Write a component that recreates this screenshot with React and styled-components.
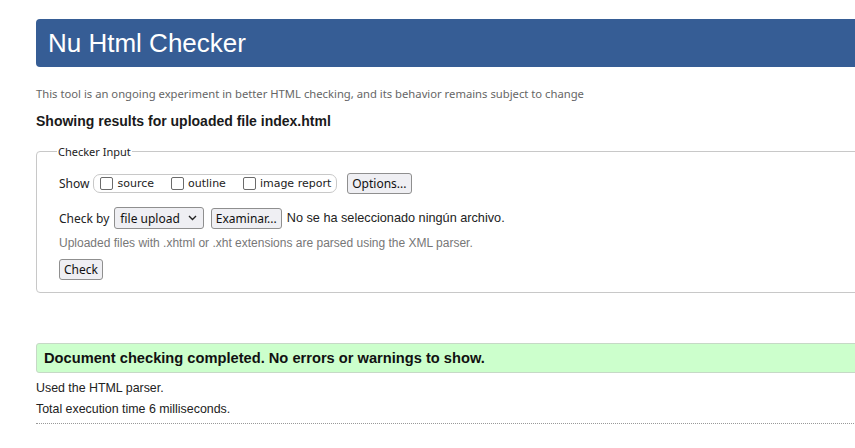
import React from 'react';
import styled, { createGlobalStyle } from 'styled-components';

const Global = createGlobalStyle`
  html, body {
    margin: 0;
    padding: 0;
    overflow: hidden;
    background: #fff;
  }
  body {
    font-family: "Liberation Sans", Arial, sans-serif;
    color: #222;
  }
`;

const Page = styled.div`
  width: 1100px;
  padding: 19px 0 0 36px;
`;

const Header = styled.h1`
  margin: 0;
  height: 48px;
  display: flex;
  align-items: center;
  padding-left: 12px;
  background: #365d95;
  color: #fff;
  border-radius: 4px;
  font-family: "Liberation Sans", Arial, sans-serif;
  font-weight: normal;
  font-size: 26px;
`;

const Intro = styled.p`
  margin: 19px 0 0;
  font-family: "Noto Sans", "Open Sans", sans-serif;
  font-size: 11.25px;
  color: #666;
`;

const Title = styled.h2`
  margin: 12px 0 0;
  font-size: 14px;
  font-weight: bold;
  color: #1a1a1a;
`;

const Fieldset = styled.fieldset`
  margin: 15px 0 0;
  padding: 14px 0 12px 22px;
  border: 1px solid #c8c8c8;
  border-radius: 4px;
`;

const Legend = styled.legend`
  margin-left: -2px;
  padding: 0 1px;
  font-family: "Noto Sans", "Open Sans", sans-serif;
  font-size: 11px;
  color: #222;
`;

const Row = styled.div`
  display: flex;
  align-items: center;
  gap: ${(p) => p.gap || 8}px;
  margin-top: ${(p) => p.top || 0}px;
`;

const Label = styled.span`
  font-family: "Noto Sans", "Open Sans", sans-serif;
  font-size: 12px;
  color: #222;
`;

const Group = styled.div`
  display: flex;
  align-items: center;
  gap: 17px;
  height: 17px;
  padding: 0 5px 0 6px;
  border: 1px solid #c8c8c8;
  border-radius: 7px;
`;

const Check = styled.label`
  display: flex;
  align-items: center;
  gap: 4px;
  font-family: "DejaVu Sans", Verdana, sans-serif;
  font-size: 11px;
  color: #222;
`;

const Box = styled.span`
  width: 11px;
  height: 11px;
  border: 1px solid #6b6b6b;
  border-radius: 2px;
  background: #fff;
`;

const Button = styled.button`
  height: 21px;
  padding: 0 4px;
  margin-left: ${(p) => p.ml || 0}px;
  border: 1px solid #8f8f8f;
  border-radius: 3px;
  background: #efeff3;
  font-family: "Noto Sans", "Open Sans", sans-serif;
  font-size: 12px;
  color: #111;
`;

const Select = styled.div`
  display: flex;
  align-items: center;
  gap: 8px;
  height: 20px;
  padding: 0 6px 0 5px;
  border: 1px solid #8f8f8f;
  border-radius: 3px;
  background: #efeff3;
  font-family: "Noto Sans", "Open Sans", sans-serif;
  font-size: 12px;
  color: #111;
`;

const FileNote = styled.span`
  font-size: 12.7px;
  color: #222;
`;

const Hint = styled.p`
  margin: 7px 0 0;
  font-size: 12px;
  color: #777;
`;

const Success = styled.div`
  margin-top: 50px;
  height: 28px;
  display: flex;
  align-items: center;
  padding-left: 7px;
  background: #ccffcc;
  border: 1px solid #c6d9c6;
  border-radius: 3px;
  font-size: 14.67px;
  font-weight: bold;
  color: #111;
`;

const Info = styled.p`
  margin: ${(p) => p.top || 0}px 0 0;
  font-size: 12.4px;
  color: #222;
`;

const Divider = styled.hr`
  margin: 7px 0 0;
  border: 0;
  border-top: 1px dotted #999;
`;

const Chevron = () => (
  <svg width="9" height="6" viewBox="0 0 9 6">
    <path d="M1 1l3.5 3.5L8 1" fill="none" stroke="#222" strokeWidth="1.4" />
  </svg>
);

export default function App() {
  return (
    <Page>
      <Global />
      <Header>Nu Html Checker</Header>
      <Intro>
        This tool is an ongoing experiment in better HTML checking, and its behavior remains subject to change
      </Intro>
      <Title>Showing results for uploaded file index.html</Title>
      <Fieldset>
        <Legend>Checker Input</Legend>
        <Row gap={4}>
          <Label>Show</Label>
          <Group>
            <Check><Box />source</Check>
            <Check><Box />outline</Check>
            <Check><Box />image report</Check>
          </Group>
          <Button ml={6}>Options...</Button>
        </Row>
        <Row gap={5} top={13}>
          <Label>Check by</Label>
          <Select>
            file upload <Chevron />
          </Select>
          <Button ml={2}>Examinar...</Button>
          <FileNote>No se ha seleccionado ningún archivo.</FileNote>
        </Row>
        <Hint>Uploaded files with .xhtml or .xht extensions are parsed using the XML parser.</Hint>
        <Row top={9}>
          <Button>Check</Button>
        </Row>
      </Fieldset>
      <Success>Document checking completed. No errors or warnings to show.</Success>
      <Info top={8}>Used the HTML parser.</Info>
      <Info top={7}>Total execution time 6 milliseconds.</Info>
      <Divider />
    </Page>
  );
}
